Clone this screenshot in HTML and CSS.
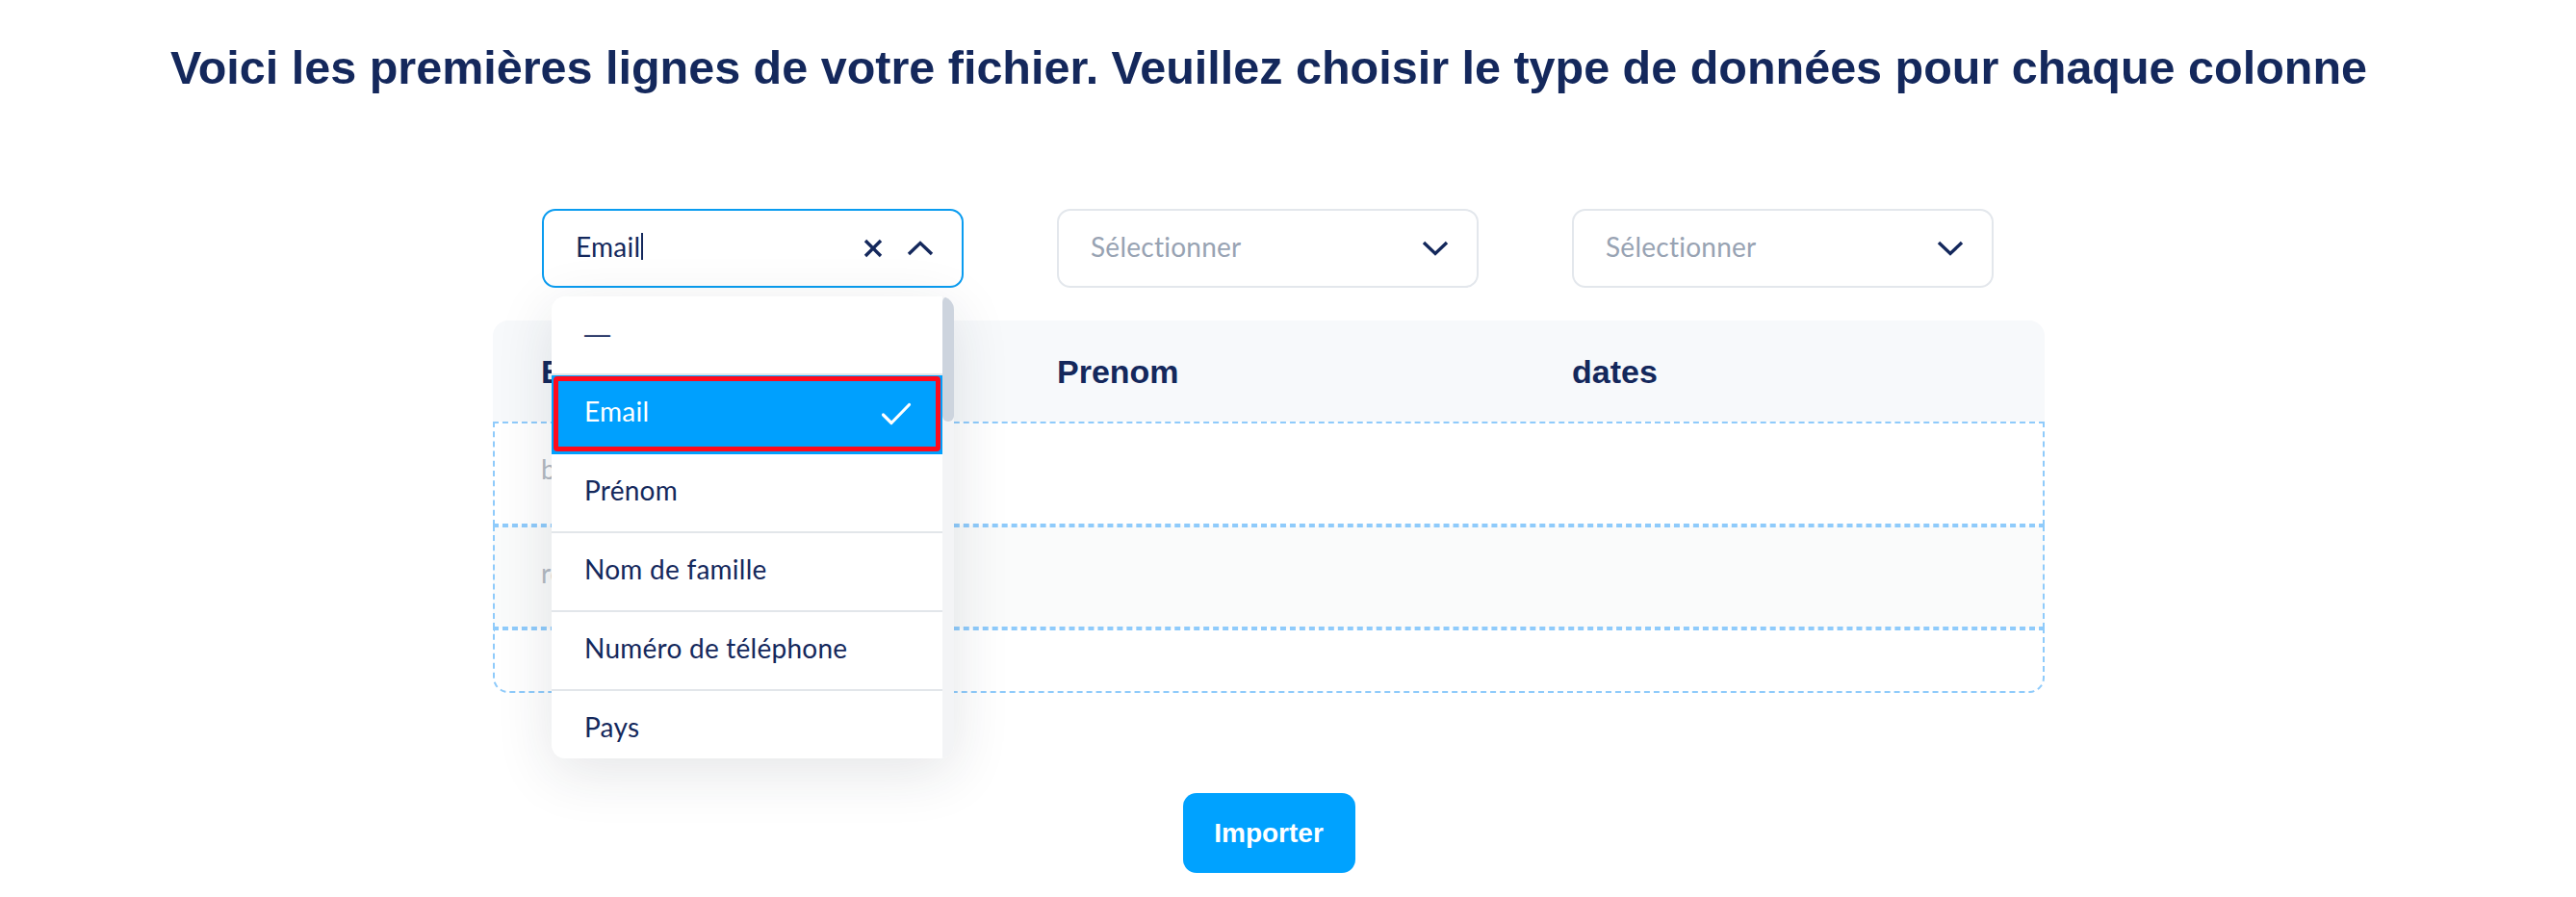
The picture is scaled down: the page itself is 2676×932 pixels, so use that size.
FILE: index.html
```html
<!DOCTYPE html>
<html lang="fr">
<head>
<meta charset="utf-8">
<title>Import</title>
<link rel="stylesheet" href="styles.css">
</head>
<body>
<div class="page">
  <h1 class="title">Voici les premières lignes de votre fichier. Veuillez choisir le type de données pour chaque colonne</h1>
  <div class="board">
    <div class="selects">
      <div class="select-wrap">
        <div class="select focused">
          <span class="value">Email</span><span class="caret"></span>
          <span class="icons">
            <svg class="ico-x" width="20" height="20" viewBox="0 0 20 20"><path d="M2 2 L18 18 M18 2 L2 18" fill="none" stroke="#14285c" stroke-width="3.4"/></svg>
            <svg class="ico-chev" width="28" height="16" viewBox="0 0 28 16"><polyline points="2,14 14,2.5 26,14" fill="none" stroke="#14285c" stroke-width="3.4"/></svg>
          </span>
        </div>
        <div class="menu">
          <ul class="options">
            <li class="option"><span class="dash">—</span></li>
            <li class="option selected"><span>Email</span>
              <svg class="check" width="32" height="24" viewBox="0 0 32 24"><polyline points="2.5,13 11,21.5 29.5,2.5" fill="none" stroke="#ffffff" stroke-width="3.2" stroke-linecap="round" stroke-linejoin="round"/></svg>
            </li>
            <li class="option">Prénom</li>
            <li class="option">Nom de famille</li>
            <li class="option">Numéro de téléphone</li>
            <li class="option">Pays</li>
          </ul>
          <div class="scrollbar"><div class="thumb"></div></div>
        </div>
      </div>
      <div class="select-wrap">
        <div class="select">
          <span class="placeholder">Sélectionner</span>
          <svg class="ico-chev" width="28" height="16" viewBox="0 0 28 16"><polyline points="2,2 14,13.5 26,2" fill="none" stroke="#14285c" stroke-width="3.4"/></svg>
        </div>
      </div>
      <div class="select-wrap">
        <div class="select">
          <span class="placeholder">Sélectionner</span>
          <svg class="ico-chev" width="28" height="16" viewBox="0 0 28 16"><polyline points="2,2 14,13.5 26,2" fill="none" stroke="#14285c" stroke-width="3.4"/></svg>
        </div>
      </div>
    </div>
    <div class="table">
      <div class="thead">
        <div class="th">Email</div>
        <div class="th">Prenom</div>
        <div class="th">dates</div>
      </div>
      <div class="trow">
        <div class="td">bob</div><div class="td"></div><div class="td"></div>
      </div>
      <div class="trow alt">
        <div class="td">rose</div><div class="td"></div><div class="td"></div>
      </div>
      <div class="trow last">
        <div class="td"></div><div class="td"></div><div class="td"></div>
      </div>
    </div>
  </div>
  <div class="actions">
    <button class="import" type="button">Importer</button>
  </div>
</div>
</body>
</html>
```

FILE: styles.css
```css
* { box-sizing: border-box; }

html, body {
  margin: 0;
  padding: 0;
  background: #ffffff;
}

body {
  width: 2676px;
  height: 932px;
  overflow: hidden;
  font-family: "Liberation Sans", Arial, sans-serif;
  color: #14285c;
}

.page {
  width: 2636px;
  padding-top: 42px;
}

.title {
  margin: 0;
  font-family: "Liberation Sans", Arial, sans-serif;
  font-weight: 700;
  font-size: 48.5px;
  line-height: 56px;
  text-align: center;
  color: #14285c;
}

.board {
  width: 1612px;
  margin: 119px auto 0;
}

.selects {
  display: flex;
  gap: 97px;
  padding-left: 51px;
  position: relative;
  z-index: 3;
}

.select-wrap {
  position: relative;
  width: 438px;
}

.select {
  height: 82px;
  border: 2px solid #e3e7ec;
  border-radius: 14px;
  background: #ffffff;
  display: flex;
  align-items: center;
  padding: 0 29px 0 33px;
  font-family: Lato, "Liberation Sans", sans-serif;
  font-size: 28px;
  line-height: 34px;
  letter-spacing: 0.25px;
}

.select.focused {
  border-color: #0a9cf0;
}

.value {
  color: #14285c;
  padding-bottom: 4px;
}

.caret {
  display: inline-block;
  width: 2px;
  height: 28px;
  background: #14285c;
  margin-left: 1px;
  margin-bottom: 4px;
}

.placeholder {
  color: #98a3b3;
  flex: 1;
  padding-bottom: 4px;
}

.icons {
  margin-left: auto;
  display: flex;
  align-items: center;
  gap: 25px;
}

.ico-x, .ico-chev, .check {
  display: block;
}

.menu {
  position: absolute;
  top: 91px;
  left: 10px;
  width: 418px;
  height: 480px;
  background: #ffffff;
  border-radius: 14px;
  overflow: hidden;
  display: flex;
  box-shadow: 0 14px 60px rgba(30, 40, 60, 0.12);
  z-index: 10;
}

.options {
  list-style: none;
  margin: 0;
  padding: 0;
  flex: 1;
}

.option {
  height: 82px;
  border-bottom: 2px solid #e2e6ea;
  padding: 20px 32px 0 34px;
  font-family: Lato, "Liberation Sans", sans-serif;
  font-size: 28px;
  line-height: 34px;
  letter-spacing: 0.25px;
  color: #14285c;
  display: flex;
  align-items: flex-start;
  justify-content: space-between;
}

.dash {
  font-family: "Liberation Sans", Arial, sans-serif;
  font-size: 27px;
  margin-top: 2px;
}

.option.selected {
  position: relative;
  background: #00a0fe;
  color: #ffffff;
  border-bottom-color: #00a0fe;
}

.option.selected::after {
  content: "";
  position: absolute;
  top: 1px;
  left: 2px;
  right: 2px;
  bottom: 1px;
  border: 5px solid #ff0a1c;
  border-radius: 4px;
}

.option.selected .check {
  margin-top: 8px;
}

.scrollbar {
  width: 12px;
  background: #f3f4f6;
  border-radius: 0 0 6px 0;
}

.thumb {
  height: 130px;
  background: #cdd4de;
  border-radius: 6px;
}

.table {
  margin-top: 34px;
  position: relative;
  z-index: 1;
}

.thead {
  height: 105px;
  background: #f7f9fb;
  border-radius: 16px 16px 0 0;
  display: grid;
  grid-template-columns: 536px 535px 1fr;
  padding: 33px 0 0 50px;
}

.th {
  font-family: "Liberation Sans", Arial, sans-serif;
  font-weight: 700;
  font-size: 34px;
  line-height: 40px;
  color: #14285c;
}

.trow {
  height: 108px;
  border: 2px dashed #8fcbfb;
  display: grid;
  grid-template-columns: 536px 535px 1fr;
  padding: 30px 0 0 48px;
  background: #ffffff;
}

.trow.alt {
  height: 107px;
  background: #fafbfb;
}

.trow.last {
  height: 67px;
  border-radius: 0 0 16px 16px;
}

.td {
  font-family: Lato, "Liberation Sans", sans-serif;
  font-size: 28px;
  line-height: 34px;
  color: #b3b9c2;
  white-space: nowrap;
}

.actions {
  display: flex;
  justify-content: center;
  margin-top: 104px;
}

.import {
  width: 179px;
  height: 83px;
  border: none;
  border-radius: 14px;
  background: #00a2ff;
  color: #ffffff;
  font-family: "Liberation Sans", Arial, sans-serif;
  font-weight: 700;
  font-size: 28px;
  line-height: 34px;
  padding: 0;
  cursor: pointer;
}
```
